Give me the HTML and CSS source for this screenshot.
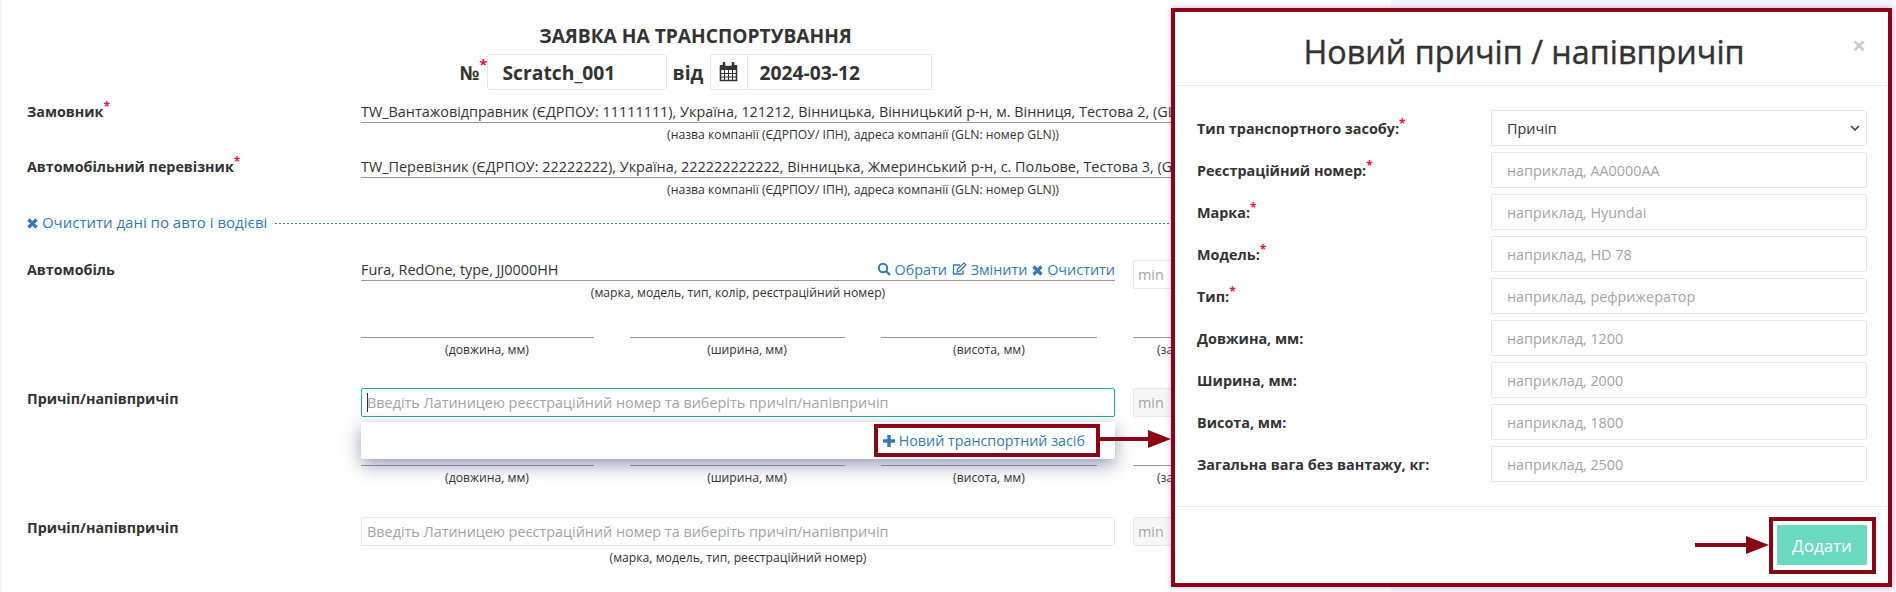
FILE: index.html
```html
<!DOCTYPE html>
<html>
  <head>
    <meta charset="utf-8">
    <title>Заявка на транспортування</title>
    <link rel="stylesheet" href="styles.css">
  </head>
  <body>
    <div class="sheet">
      <h1 class="title">ЗАЯВКА НА ТРАНСПОРТУВАННЯ</h1>
      <div class="number-row">
        <span class="number-label">№<sup class="req">*</sup></span>
        <input class="number-input" type="text" value="Scratch_001">
        <span class="number-from">від</span>
        <div class="date-group">
          <span class="date-addon">
            <svg width="19" height="20" viewBox="0 0 19 20">
              <path d="M1.5 4.5h16v14h-16z" fill="none" stroke="#333" stroke-width="1.6"/>
              <path d="M1 3h4v2h9V3h4v5H1z" fill="#333"/>
              <path d="M5 1v4M14 1v4" stroke="#333" stroke-width="2.6" stroke-linecap="round"/>
              <path d="M5.5 8v10M9.5 8v10M13.5 8v10M2 11.5h15M2 15h15" stroke="#333" stroke-width="1"/>
            </svg>
          </span>
          <input class="date-input" type="text" value="2024-03-12">
        </div>
      </div>

      <div class="row row-customer">
        <div class="row-label">Замовник<sup class="req">*</sup></div>
        <div class="row-field">
          <div class="line">TW_Вантажовідправник (ЄДРПОУ: 11111111), Україна, 121212, Вінницька, Вінницький р-н, м. Вінниця, Тестова 2, (GLN</div>
          <div class="hint">(назва компанії (ЄДРПОУ/ ІПН), адреса компанії (GLN: номер GLN))</div>
        </div>
      </div>

      <div class="row row-carrier">
        <div class="row-label">Автомобільний перевізник<sup class="req">*</sup></div>
        <div class="row-field">
          <div class="line">TW_Перевізник (ЄДРПОУ: 22222222), Україна, 222222222222, Вінницька, Жмеринський р-н, с. Польове, Тестова 3, (GLN</div>
          <div class="hint">(назва компанії (ЄДРПОУ/ ІПН), адреса компанії (GLN: номер GLN))</div>
        </div>
      </div>

      <div class="clear-row">
        <a class="link" href="#">
          <svg class="icon" width="11" height="11" viewBox="0 0 11 11"><path d="M1.500 1.500l8 8M9.500 1.500l-8 8" stroke="#337ab7" stroke-width="3.200"/></svg>
          Очистити дані по авто і водієві
        </a>
        <span class="dots"></span>
      </div>

      <div class="row row-car">
        <div class="row-label">Автомобіль</div>
        <div class="row-field">
          <div class="split">
            <div class="split-main">
              <div class="line line-actions">
                <span>Fura, RedOne, type, JJ0000HH</span>
                <span class="actions">
                  <a class="link" href="#">
                    <svg class="icon" width="14" height="14" viewBox="0 0 14 14"><circle cx="6" cy="6" r="4.2" fill="none" stroke="#337ab7" stroke-width="2"/><path d="M9 9l4 4" stroke="#337ab7" stroke-width="2.4"/></svg>
                    Обрати</a>
                  <a class="link" href="#">
                    <svg class="icon" width="15" height="14" viewBox="0 0 15 14"><path d="M11 8.500V12H1.500V3H8" fill="none" stroke="#337ab7" stroke-width="1.300"/><path d="M5 10l.6-3L12 1l2 2-6.200 6z" fill="none" stroke="#337ab7" stroke-width="1.200"/></svg>
                    Змінити</a>
                  <a class="link" href="#">
                    <svg class="icon" width="11" height="11" viewBox="0 0 11 11"><path d="M1.500 1.500l8 8M9.500 1.500l-8 8" stroke="#337ab7" stroke-width="3.200"/></svg>
                    Очистити</a>
                </span>
              </div>
              <div class="hint">(марка, модель, тип, колір, реєстраційний номер)</div>
            </div>
            <input class="min-input min-white" type="text" placeholder="min">
          </div>
        </div>
      </div>

      <div class="row row-dims">
        <div class="row-label"></div>
        <div class="row-field dims">
          <div><div class="line"></div><div class="hint hint-shift">(довжина, мм)</div></div>
          <div><div class="line"></div><div class="hint hint-shift">(ширина, мм)</div></div>
          <div><div class="line"></div><div class="hint">(висота, мм)</div></div>
          <div><div class="line"></div><div class="hint hint-last">(за</div></div>
        </div>
      </div>

      <div class="row row-trailer">
        <div class="row-label">Причіп/напівпричіп</div>
        <div class="row-field">
          <div class="split">
            <div class="split-main trailer-box">
              <input class="trailer-input trailer-focus" type="text" placeholder="Введіть Латиницею реєстраційний номер та виберіть причіп/напівпричіп">
              <span class="caret"></span>
              <div class="dropdown">
                <a class="link new-vehicle" href="#">
                  <svg class="icon" width="12" height="12" viewBox="0 0 12 12"><path d="M6 0v12M0 6h12" stroke="#337ab7" stroke-width="3.400"/></svg>
                  Новий транспортний засіб
                  <span class="arrow arrow-out"><span class="arrow-bar"></span><span class="arrow-head"></span></span>
                </a>
              </div>
            </div>
            <input class="min-input" type="text" placeholder="min">
          </div>
        </div>
      </div>

      <div class="row row-dims2">
        <div class="row-label"></div>
        <div class="row-field dims">
          <div><div class="line"></div><div class="hint hint-shift">(довжина, мм)</div></div>
          <div><div class="line"></div><div class="hint hint-shift">(ширина, мм)</div></div>
          <div><div class="line"></div><div class="hint">(висота, мм)</div></div>
          <div><div class="line"></div><div class="hint hint-last">(за</div></div>
        </div>
      </div>

      <div class="row row-trailer2">
        <div class="row-label">Причіп/напівпричіп</div>
        <div class="row-field">
          <div class="split">
            <div class="split-main">
              <input class="trailer-input" type="text" placeholder="Введіть Латиницею реєстраційний номер та виберіть причіп/напівпричіп">
              <div class="hint">(марка, модель, тип, реєстраційний номер)</div>
            </div>
            <input class="min-input" type="text" placeholder="min">
          </div>
        </div>
      </div>
    </div>

    <div class="modal">
      <div class="modal-head">
        <h2 class="modal-title">Новий причіп / напівпричіп</h2>
        <span class="modal-close">×</span>
      </div>
      <div class="modal-body">
        <label class="modal-label">Тип транспортного засобу:<sup class="req">*</sup></label>
        <select class="modal-input modal-select"><option>Причіп</option></select>
        <label class="modal-label">Реєстраційний номер:<sup class="req">*</sup></label>
        <input class="modal-input" type="text" placeholder="наприклад, АА0000АА">
        <label class="modal-label">Марка:<sup class="req">*</sup></label>
        <input class="modal-input" type="text" placeholder="наприклад, Hyundai">
        <label class="modal-label">Модель:<sup class="req">*</sup></label>
        <input class="modal-input" type="text" placeholder="наприклад, HD 78">
        <label class="modal-label">Тип:<sup class="req">*</sup></label>
        <input class="modal-input" type="text" placeholder="наприклад, рефрижератор">
        <label class="modal-label">Довжина, мм:</label>
        <input class="modal-input" type="text" placeholder="наприклад, 1200">
        <label class="modal-label">Ширина, мм:</label>
        <input class="modal-input" type="text" placeholder="наприклад, 2000">
        <label class="modal-label">Висота, мм:</label>
        <input class="modal-input" type="text" placeholder="наприклад, 1800">
        <label class="modal-label">Загальна вага без вантажу, кг:</label>
        <input class="modal-input" type="text" placeholder="наприклад, 2500">
      </div>
      <div class="modal-foot">
        <span class="arrow"><span class="arrow-bar"></span><span class="arrow-head"></span></span>
        <div class="mark-box"><button class="add-btn" type="button">Додати</button></div>
      </div>
    </div>
  </body>
</html>
```

FILE: styles.css
```css
*{
  box-sizing:border-box;
}
html,body{
  margin:0;
  padding:0;
  height:592px;
  overflow:hidden;
}
body{
  background:#f7f6fb;
  font-family:"Open Sans",sans-serif;
  font-size:14px;
  color:#333;
}
.sheet{
  width:1391px;
  height:592px;
  padding:24px 26px 0 25px;
  background:#fff;
  border-left:2px solid #f5f5f5;
  overflow:hidden;
}
.req{
  color:#e8114a;
  font-size:12px;
  font-weight:bold;
  line-height:0;
}
.link{
  color:#337ab7;
  text-decoration:none;
}
.icon{
  vertical-align:-1px;
}

/* header */
.title{
  margin:0 0 0 -1px;
  font-size:19.200px;
  line-height:24px;
  font-weight:bold;
  text-align:center;
}
.number-row{
  display:flex;
  justify-content:center;
  align-items:center;
  height:36px;
  margin-top:6px;
  margin-left:-1px;
  font-size:19.300px;
  font-weight:bold;
}
.number-label{
  width:27px;
  white-space:nowrap;
}
.number-label .req{
  font-size:15px;
  position:relative;
  top:-2px;
}
.number-input,.date-input{
  height:36px;
  border:1px solid #e8e8e8;
  font-family:inherit;
  font-size:19.300px;
  font-weight:bold;
  color:#333;
  outline:none;
}
.number-input{
  width:180px;
  padding:0 15px;
  border-radius:2px;
}
.number-from{
  width:43px;
  text-align:center;
}
.date-group{
  display:flex;
  width:222px;
}
.date-addon{
  display:flex;
  align-items:center;
  justify-content:center;
  width:37px;
  height:36px;
  border:1px solid #e8e8e8;
  border-right:none;
}
.date-input{
  flex:1;
  min-width:0;
  padding:0 12px;
}

/* form rows */
.row{
  display:flex;
}
.row-label{
  width:334px;
  flex:none;
  font-weight:bold;
  font-size:14.300px;
  line-height:20px;
  white-space:nowrap;
}
.row-field{
  flex:1;
  min-width:0;
}
.row-customer{
  margin-top:12px;
}
.row-carrier{
  margin-top:14px;
}
.line{
  height:21px;
  line-height:20px;
  border-bottom:1px solid #999;
  white-space:nowrap;
  overflow:hidden;
  font-size:14.400px;
}
.line-actions{
  display:flex;
  justify-content:space-between;
}
.actions{
  display:flex;
  gap:5px;
}
.hint{
  font-size:12.200px;
  line-height:16px;
  margin-top:4px;
  text-align:center;
  white-space:nowrap;
  color:#333;
}
.hint-shift{
  padding-left:19px;
}
.hint-last{
  text-align:left;
  padding-left:24px;
}

/* clear link with dotted rule */
.clear-row{
  display:flex;
  align-items:center;
  height:20px;
  margin-top:14px;
  font-size:15px;
}
.dots{
  flex:1;
  height:1px;
  margin-left:8px;
  margin-top:2px;
  background:repeating-linear-gradient(90deg,#337ab7 0,#337ab7 2px,transparent 2px,transparent 4px);
}

.row-car{
  margin-top:28px;
}
.split{
  display:flex;
  gap:18px;
}
.split-main{
  width:754px;
  flex:none;
}
.min-input{
  flex:1;
  min-width:0;
  height:29px;
  padding:0 4px;
  border:1px solid #e8e8e8;
  background:#f7f7f7;
  border-radius:2px;
  font-family:inherit;
  font-size:14.400px;
}
.min-white{
  background:#fff;
}
input::placeholder{
  color:#a4a4a4;
  opacity:1;
}

.dims{
  display:grid;
  grid-template-columns:233px 215px 216px 232px;
  column-gap:36px;
}
.row-dims{
  margin-top:16px;
}

/* trailer search */
.row-trailer{
  margin-top:30px;
}
.row-trailer .row-label,.row-trailer2 .row-label{
  padding-top:1px;
}
.trailer-box{
  position:relative;
}
.trailer-input{
  display:block;
  width:100%;
  height:29px;
  padding:0 5px;
  border:1px solid #e5e6e7;
  border-radius:2px;
  font-family:inherit;
  font-size:14.400px;
  outline:none;
}
.trailer-focus{
  border-color:#1ab394;
}
.caret{
  position:absolute;
  left:6px;
  top:5px;
  width:1px;
  height:19px;
  background:#333;
}
.dropdown{
  position:absolute;
  left:0;
  top:34px;
  width:754px;
  height:37px;
  padding:2px 15px 0 0;
  display:flex;
  justify-content:flex-end;
  align-items:flex-start;
  background:#fff;
  border-radius:2px;
  box-shadow:0 6px 18px rgba(70,75,120,.55);
  z-index:2;
}
.new-vehicle{
  position:relative;
  display:block;
  width:226px;
  height:33px;
  line-height:25px;
  padding-left:5px;
  border:4px solid #8b0614;
  font-size:14.300px;
  white-space:nowrap;
}

/* red annotation arrow */
.arrow{
  display:inline-flex;
  align-items:center;
  flex:none;
  width:74px;
}
.arrow-bar{
  flex:1;
  height:4px;
  background:#8b0614;
}
.arrow-head{
  width:0;
  height:0;
  border-left:23px solid #8b0614;
  border-top:9px solid transparent;
  border-bottom:9px solid transparent;
}
.arrow-out{
  position:absolute;
  left:100%;
  top:-6px;
  margin-left:4px;
  width:71px;
  height:33px;
}

.row-dims2{
  margin-top:28px;
}
.row-trailer2{
  margin-top:31px;
}

/* modal */
.modal{
  position:absolute;
  left:1171px;
  top:8px;
  width:721px;
  height:579px;
  display:flex;
  flex-direction:column;
  background:#fff;
  border:4px solid #8b0614;
  box-shadow:0 0 6px rgba(120,60,170,.4);
  z-index:5;
}
.modal-head{
  position:relative;
  flex:none;
  height:74px;
  padding-right:15px;
  border-bottom:1px solid #e8e8e8;
  text-align:center;
}
.modal-title{
  margin:0;
  padding-top:19px;
  font-size:32.300px;
  line-height:41px;
  font-weight:normal;
  -webkit-text-stroke:.4px #333;
}
.modal-close{
  position:absolute;
  right:22px;
  top:21px;
  font-size:24px;
  line-height:24px;
  font-weight:bold;
  color:#c9c9c9;
}
.modal-body{
  flex:1;
  display:grid;
  grid-template-columns:294px 376px;
  grid-auto-rows:36px;
  row-gap:6px;
  padding:24px 0 0 22px;
}
.modal-label{
  font-weight:bold;
  font-size:14.400px;
  line-height:38px;
  white-space:nowrap;
}
.modal-input{
  width:100%;
  height:36px;
  padding:0 15px;
  border:1px solid #e5e6e7;
  border-radius:2px;
  background:#fff;
  font-family:inherit;
  font-size:14.400px;
  color:#333;
  outline:none;
}
.modal-select{
  appearance:none;
  background:#fff url("data:image/svg+xml,%3Csvg xmlns='http://www.w3.org/2000/svg' width='10' height='7' viewBox='0 0 10 7'%3E%3Cpath d='M1 1l4 4 4-4' fill='none' stroke='%23333' stroke-width='1.500'/%3E%3C/svg%3E") no-repeat right 6px center;
}
.modal-foot{
  flex:none;
  height:77px;
  display:flex;
  justify-content:flex-end;
  align-items:flex-start;
  padding:10px 12px 0 0;
  border-top:1px solid #e8e8e8;
}
.modal-foot .arrow{
  margin-top:19px;
}
.mark-box{
  width:107px;
  height:57px;
  padding:4px;
  border:4px solid #8b0614;
}
.add-btn{
  display:block;
  width:90px;
  height:40px;
  border:none;
  border-radius:2px;
  background:#6bd9c0;
  color:#fff;
  font-family:inherit;
  font-size:17px;
}
```
